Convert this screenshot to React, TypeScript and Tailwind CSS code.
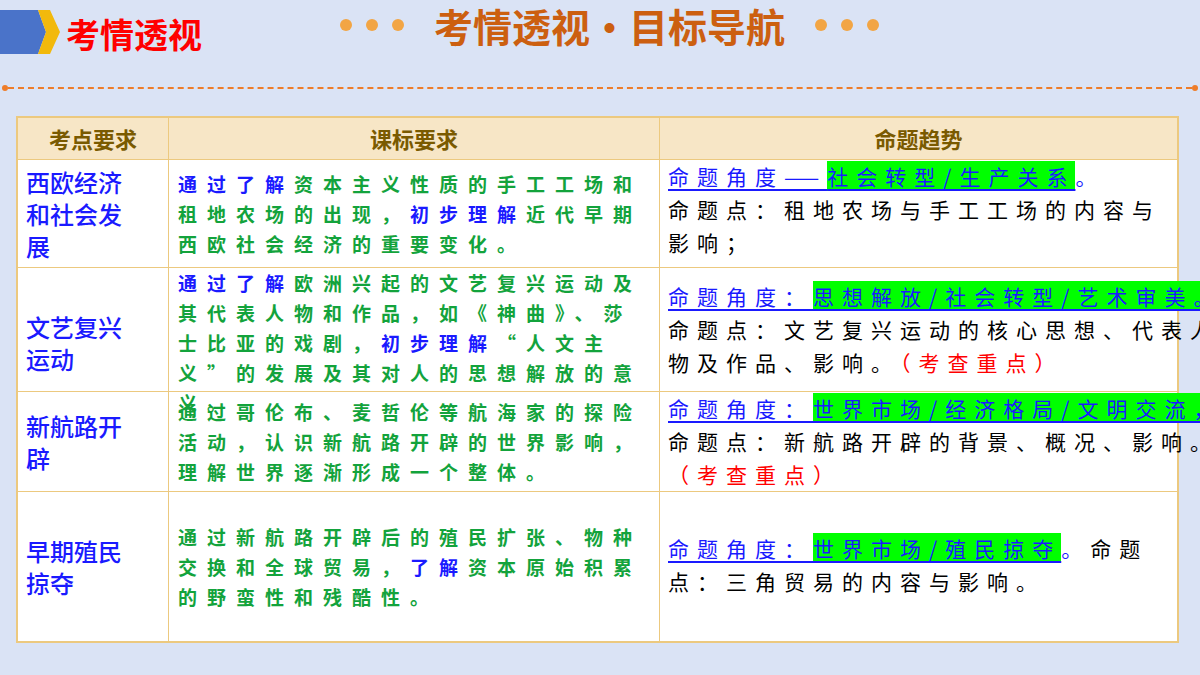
const cjk = { fontFamily: '"Noto Sans CJK SC", sans-serif' };

const B = ({ children }: { children: React.ReactNode }) => <span className="text-[#1a1aff]">{children}</span>;
const Angle = ({ lead, hl, tail }: { lead: string; hl: string; tail?: string }) => (
  <span className="text-[#1a1aff] underline decoration-[#1a1aff] underline-offset-4 whitespace-nowrap">
    {lead}
    <span className="bg-[#00ff00]">{hl}</span>
    {tail}
  </span>
);
const Red = ({ children }: { children: React.ReactNode }) => <span className="text-[#ff0000]">{children}</span>;

const rows = [
  {
    h: "h-[108px]",
    k: "西欧经济和社会发展",
    mid: (<><B>通过了解</B>资本主义性质的手工工场和租地农场的出现，<B>初步理解</B>近代早期西欧社会经济的重要变化。</>),
    right: (<><Angle lead="命题角度——" hl="社会转型/生产关系" /><B>。</B><br />命题点：租地农场与手工工场的内容与影响；</>),
    pt: "pt-0",
  },
  {
    h: "h-[124px]",
    k: "文艺复兴运动",
    mid: (<><B>通过了解</B>欧洲兴起的文艺复兴运动及其代表人物和作品，如《神曲》、莎士比亚的戏剧，<B>初步理解</B>“人文主义”的发展及其对人的思想解放的意义。</>),
    right: (<><Angle lead="命题角度：" hl="思想解放/社会转型/艺术审美。" /><br />命题点：文艺复兴运动的核心思想、代表人物及作品、影响。<Red>（考查重点）</Red></>),
    pt: "pt-[12px]",
  },
  {
    h: "h-[100px]",
    k: "新航路开辟",
    mid: (<>通过哥伦布、麦哲伦等航海家的探险活动，认识新航路开辟的世界影响，理解世界逐渐形成一个整体。</>),
    right: (<><Angle lead="命题角度：" hl="世界市场/经济格局/文明交流，" /><br />命题点：新航路开辟的背景、概况、影响。<Red>（考查重点）</Red></>),
    pt: "pt-0",
  },
  {
    h: "h-[150px]",
    k: "早期殖民掠夺",
    mid: (<>通过新航路开辟后的殖民扩张、物种交换和全球贸易，<B>了解</B>资本原始积累的野蛮性和残酷性。</>),
    right: (<><Angle lead="命题角度：" hl="世界市场/殖民掠夺" /><B>。</B>命题点：三角贸易的内容与影响。</>),
    pt: "pt-[40px]",
  },
];

export default function App() {
  return (
    <div className="w-[1200px] h-[675px] bg-[#dae3f5] overflow-hidden" style={cjk}>
      <div className="flex items-start h-[60px]">
        <div className="flex items-center pt-[8px] w-[340px]">
          <svg width="62" height="48" viewBox="0 0 62 48">
            <polygon points="0,2 38,2 46,24 38,46 0,46" fill="#4a73c9" />
            <polygon points="38,2 50,2 60,24 50,46 38,46 46,24" fill="#f2b90c" />
          </svg>
          <span className="text-[34px] font-bold text-[#ff0000] ml-[4px] leading-none mt-[4px]">考情透视</span>
        </div>
        <div className="flex items-center pt-[2px]">
          <div className="flex gap-[14px] mr-[30px]">
            <span className="w-[12px] h-[12px] rounded-full bg-[#f2a544]" />
            <span className="w-[12px] h-[12px] rounded-full bg-[#f2a544]" />
            <span className="w-[12px] h-[12px] rounded-full bg-[#f2a544]" />
          </div>
          <span className="text-[39px] font-bold text-[#cc5f10] leading-[46px]">考情透视·目标导航</span>
          <div className="flex gap-[14px] ml-[30px]">
            <span className="w-[12px] h-[12px] rounded-full bg-[#f2a544]" />
            <span className="w-[12px] h-[12px] rounded-full bg-[#f2a544]" />
            <span className="w-[12px] h-[12px] rounded-full bg-[#f2a544]" />
          </div>
        </div>
      </div>
      <div className="flex items-center h-[56px] px-[2px]">
        <span className="w-[6px] h-[6px] rounded-full bg-[#ee7d2a]" />
        <div className="flex-1 border-t-2 border-dashed border-[#ee7d2a]" />
        <span className="w-[6px] h-[6px] rounded-full bg-[#ee7d2a]" />
      </div>
      <div className="ml-[16px] w-[1163px] border-2 border-[#ecc97f] bg-white">
        <div className="grid grid-cols-[151px_491px_1fr] h-[41px] bg-[#f7e6c6] text-[#7a5a00] font-bold text-[22px]">
          <div className="flex items-center justify-center border-r border-[#ecc97f]">考点要求</div>
          <div className="flex items-center justify-center border-r border-[#ecc97f]">课标要求</div>
          <div className="flex items-center justify-center">命题趋势</div>
        </div>
        {rows.map((r, i) => (
          <div key={i} className={`grid grid-cols-[151px_491px_1fr] border-t border-[#ecc97f] ${r.h}`}>
            <div className="border-r border-[#ecc97f] px-[8px] flex items-center text-[24px] leading-[32px] text-[#1a1aff] font-medium">
              <p className="w-[100px]">{r.k}</p>
            </div>
            <div className="border-r border-[#ecc97f] pl-[9px] pr-0 flex items-center text-[19px] leading-[30px] tracking-[10px] text-[#13a33c] font-semibold">
              <p>{r.mid}</p>
            </div>
            <div className={`pl-[8px] pr-0 text-[21px] leading-[33px] tracking-[8px] text-black ${r.pt}`}>
              <p>{r.right}</p>
            </div>
          </div>
        ))}
      </div>
    </div>
  );
}
